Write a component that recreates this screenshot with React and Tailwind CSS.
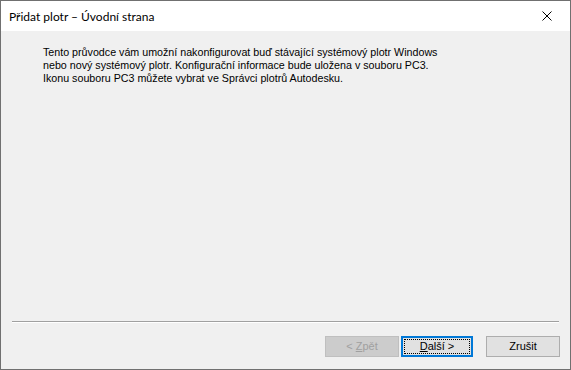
export default function App() {
  return (
    <div className="w-[571px] h-[370px] border border-[#707070] bg-[#f0f0f0] flex flex-col overflow-hidden">
      <div className="h-[30px] bg-white flex items-center justify-between shrink-0">
        <div className="pl-[8px] pt-[1px] text-[12px] text-black" style={{ fontFamily: 'Lato, "Noto Sans", sans-serif' }}>
          Přidat plotr – Úvodní strana
        </div>
        <div className="w-[46px] h-[30px] flex items-center justify-center">
          <svg width="10" height="10" viewBox="0 0 10 10">
            <path d="M0.5 0.5 L9.5 9.5 M9.5 0.5 L0.5 9.5" stroke="#000" strokeWidth="1" fill="none" />
          </svg>
        </div>
      </div>
      <div className="flex-1 flex flex-col" style={{ fontFamily: '"Liberation Sans", Arial, sans-serif' }}>
        <div className="pl-[42px] pt-[15px] text-[10.7px] leading-[13px] text-black">
          <p>Tento průvodce vám umožní nakonfigurovat buď stávající systémový plotr Windows</p>
          <p>nebo nový systémový plotr. Konfigurační informace bude uložena v souboru PC3.</p>
          <p>Ikonu souboru PC3 můžete vybrat ve Správci plotrů Autodesku.</p>
        </div>
        <div className="flex-1" />
        <div className="mx-[11px] border-t border-[#a0a0a0] border-b border-b-white" />
        <div className="flex justify-end items-start pr-[10px] pt-[13px] pb-[12px]">
          <div className="w-[74px] h-[21px] bg-[#cccccc] border border-[#bfbfbf] flex items-center justify-center text-[11px] text-[#a0a0a0]">
            &lt; <span className="underline ml-[3px]">Z</span>pět
          </div>
          <div className="w-[72px] h-[21px] ml-[2px] bg-[#e1e1e1] border-2 border-[#0078d7] p-[1px]">
            <div className="w-full h-full border border-dotted border-black flex items-center justify-center text-[11px] text-black">
              <span className="underline">D</span>alší &gt;
            </div>
          </div>
          <div className="w-[74px] h-[21px] ml-[13px] bg-[#e1e1e1] border border-[#adadad] flex items-center justify-center text-[11px] text-black">
            Zrušit
          </div>
        </div>
      </div>
    </div>
  );
}
